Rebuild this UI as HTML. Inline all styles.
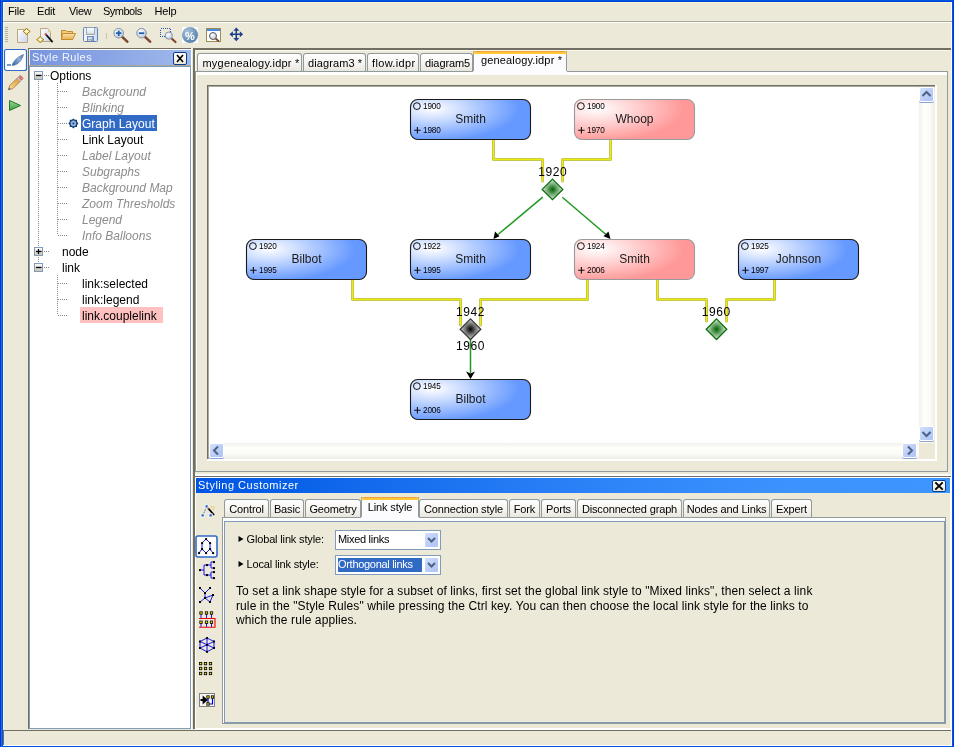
<!DOCTYPE html>
<html><head><meta charset="utf-8">
<style>
html,body{margin:0;padding:0;}
body{will-change:transform;width:954px;height:747px;overflow:hidden;position:relative;background:#0055E5;font-family:"Liberation Sans",sans-serif;font-size:11px;color:#000;}
.a{position:absolute;}
.t{position:absolute;white-space:nowrap;line-height:13px;}
</style></head><body>
<!-- window frame -->
<div class="a" style="left:0;top:0;width:1px;height:747px;background:#0831D9"></div>
<div class="a" style="left:1px;top:0;width:1px;height:747px;background:#166CEF"></div>
<div class="a" style="left:0;top:1px;width:954px;height:1px;background:#0042D6"></div>
<div class="a" style="left:953px;top:0;width:1px;height:747px;background:#0036DA"></div>
<div class="a" style="left:3px;top:2px;width:949px;height:744px;background:#ECE9D8"></div>
<div class="a" style="left:3px;top:2px;width:1px;height:728px;background:#FDF6DA"></div>
<div class="a" style="left:3px;top:2px;width:949px;height:1px;background:#FDF6DA"></div>
<div class="a" style="left:951px;top:2px;width:1px;height:744px;background:#FFFCF0"></div>
<!-- menu bar -->
<div class="t" style="left:8px;top:5px;letter-spacing:-0.2px">File</div>
<div class="t" style="left:37px;top:5px;letter-spacing:-0.2px">Edit</div>
<div class="t" style="left:69px;top:5px;letter-spacing:-0.3px">View</div>
<div class="t" style="left:103px;top:5px;letter-spacing:-0.5px">Symbols</div>
<div class="t" style="left:154.5px;top:5px;letter-spacing:-0.2px">Help</div>
<div class="a" style="left:3px;top:21px;width:949px;height:1px;background:#ACA899"></div>
<div class="a" style="left:3px;top:22px;width:949px;height:1px;background:#FFFFFF"></div>

<!-- toolbar -->
<svg class="a" style="left:0;top:23px" width="260" height="25" viewBox="0 23 260 25">
<defs>
<linearGradient id="pg" x1="0" y1="0" x2="1" y2="1"><stop offset="0" stop-color="#FFFFFF"/><stop offset="1" stop-color="#C9D6EE"/></linearGradient>
<linearGradient id="fo" x1="0" y1="0" x2="0" y2="1"><stop offset="0" stop-color="#FCE3A8"/><stop offset="1" stop-color="#E9AE55"/></linearGradient>
<radialGradient id="lens" cx="0.4" cy="0.35" r="0.7"><stop offset="0" stop-color="#FFFFFF"/><stop offset="1" stop-color="#B9C7D6"/></radialGradient>
<radialGradient id="pct" cx="0.35" cy="0.3" r="0.8"><stop offset="0" stop-color="#A9C2DA"/><stop offset="1" stop-color="#4E7AA5"/></radialGradient>
</defs>
<g fill="#B5B19E"><rect x="5" y="27" width="3" height="1"/><rect x="5" y="29" width="3" height="1"/><rect x="5" y="31" width="3" height="1"/><rect x="5" y="33" width="3" height="1"/><rect x="5" y="35" width="3" height="1"/><rect x="5" y="37" width="3" height="1"/><rect x="5" y="39" width="3" height="1"/><rect x="5" y="41" width="3" height="1"/></g>
<!-- new -->
<path d="M17.5 29.5 H24.5 L27.5 32.5 V42.5 H17.5 Z" fill="url(#pg)" stroke="#BBA878"/>
<path d="M26.6 28 L28 30 L30.2 31.4 L28 32.8 L26.6 35 L25.2 32.8 L23 31.4 L25.2 30 Z" fill="#F8E8A0" stroke="#A8800A" stroke-width="1"/><path d="M26.6 29.5 V33.3 M24.6 31.4 H28.6" stroke="#FFFFF0" stroke-width="0.8"/>
<!-- wand doc -->
<path d="M40.5 28.5 H47.5 L50.5 31.5 V41.5 H40.5 Z" fill="url(#pg)" stroke="#BBA878"/>
<path d="M40.2 36.3 L41.6 38.2 L43.8 39.6 L41.6 41 L40.2 42.9 L38.8 41 L36.6 39.6 L38.8 38.2 Z" fill="#F8E8A0" stroke="#A8800A" stroke-width="1"/><path d="M40.2 37.8 V41.4 M38.4 39.6 H42" stroke="#FFFFF0" stroke-width="0.8"/>
<path d="M45.5 34 L52.6 42.2" stroke="#111" stroke-width="1.8"/>
<path d="M45 33.5 L46.5 35" stroke="#E05030" stroke-width="1.8"/>
<rect x="48" y="31" width="1" height="1" fill="#E8C000"/><rect x="50" y="32" width="1" height="1" fill="#E8C000"/>
<!-- folder -->
<path d="M61.5 30.5 H66 L67 31.5 H72.5 V39.5 H61.5 Z" fill="#F3CB7E" stroke="#C98B2A"/>
<path d="M62.5 33.5 H75.5 L72.5 39.5 H61.5 Z" fill="url(#fo)" stroke="#C98B2A"/>
<!-- save -->
<defs><linearGradient id="sv" x1="0" y1="0" x2="1" y2="0"><stop offset="0" stop-color="#E9EEF8"/><stop offset="0.5" stop-color="#FFFFFF"/><stop offset="1" stop-color="#C9D5EA"/></linearGradient>
<linearGradient id="svl" x1="0" y1="0" x2="0" y2="1"><stop offset="0" stop-color="#FFFFFF"/><stop offset="0.7" stop-color="#DDE8F5"/><stop offset="1" stop-color="#E8C890"/></linearGradient></defs>
<rect x="83.5" y="27.5" width="14" height="14" rx="1" fill="url(#sv)" stroke="#6384B8"/>
<rect x="86.5" y="27.5" width="8" height="7" fill="url(#svl)" stroke="#8A9AB0" stroke-width="0.8"/>
<rect x="87.5" y="36.5" width="6" height="5" fill="#7FA2D4" stroke="#5A7EB5" stroke-width="0.8"/>
<rect x="88" y="37.5" width="4" height="1.2" fill="#FFFFFF"/><rect x="88" y="39.5" width="3" height="1.5" fill="#E8C890"/>
<!-- separator -->
<rect x="106" y="33" width="1" height="6" fill="#C5C2B2"/>
<!-- zoom in -->
<path d="M121.8 36.5 L127.5 41.8" stroke="#7A4A30" stroke-width="2.4" stroke-linecap="round"/>
<circle cx="118.7" cy="33.2" r="4.8" fill="url(#lens)" stroke="#8595A8" stroke-width="1"/>
<path d="M116 33.2 H121.4 M118.7 30.5 V35.9" stroke="#1F5FB0" stroke-width="1.8"/>
<!-- zoom out -->
<path d="M144.6 36.5 L150.3 41.8" stroke="#7A4A30" stroke-width="2.4" stroke-linecap="round"/>
<circle cx="141.5" cy="33.2" r="4.8" fill="url(#lens)" stroke="#8595A8" stroke-width="1"/>
<path d="M138.8 33.2 H144.2" stroke="#1F5FB0" stroke-width="1.8"/>
<!-- zoom box -->
<rect x="160.5" y="28.5" width="10" height="8" fill="none" stroke="#1F55B0" stroke-dasharray="1 1" shape-rendering="crispEdges"/>
<path d="M171 38 L175.5 42" stroke="#7A4A30" stroke-width="2.2" stroke-linecap="round"/>
<circle cx="168.8" cy="35.6" r="3.6" fill="url(#lens)" stroke="#8595A8" stroke-width="1"/>
<!-- percent -->
<rect x="182" y="27" width="16" height="16" fill="#FFFFFF"/>
<circle cx="190" cy="35" r="8" fill="url(#pct)"/>
<text x="190" y="39.5" font-family="Liberation Sans" font-weight="bold" font-size="11" fill="#FFFFFF" text-anchor="middle">%</text>
<!-- fit window -->
<rect x="206.5" y="28.5" width="14" height="13" fill="#FFFFFF" stroke="#A08A50"/>
<rect x="207" y="29" width="13" height="2" fill="#4A8AE0"/>
<path d="M215 38 L218.5 41" stroke="#7A4A30" stroke-width="1.8" stroke-linecap="round"/>
<circle cx="213" cy="36" r="3.5" fill="url(#lens)" stroke="#5A5A5A" stroke-width="1"/>
<!-- pan -->
<g stroke="#1E3F8A" stroke-width="1.6" fill="#1E3F8A">
<path d="M236.3 29 V40 M230.8 34.3 H241.8" fill="none"/>
</g>
<g fill="#1E3F8A">
<path d="M236.3 27.5 L233.3 30.8 H239.3 Z"/><path d="M236.3 41.3 L233.3 38 H239.3 Z"/>
<path d="M229.5 34.3 L232.8 31.3 V37.3 Z"/><path d="M243.1 34.3 L239.8 31.3 V37.3 Z"/>
</g>
</svg>


<!-- left vertical toolbar -->
<svg class="a" style="left:3px;top:48px" width="25" height="80" viewBox="3 48 25 80">
<defs><linearGradient id="pen" x1="0" y1="0" x2="1" y2="0"><stop offset="0" stop-color="#F8E2A0"/><stop offset="1" stop-color="#E0A040"/></linearGradient></defs>
<rect x="4.5" y="49.5" width="22" height="21" rx="2" fill="#FFFFFF" stroke="#3169C6" stroke-width="1.2"/>
<defs><linearGradient id="fe" x1="0" y1="1" x2="1" y2="0"><stop offset="0" stop-color="#2F5E9E"/><stop offset="0.6" stop-color="#8FB0D8"/><stop offset="1" stop-color="#5C6F8A"/></linearGradient></defs>
<path d="M12 65.5 C13.5 61 17 57 23.5 54.5 C22.5 58 20.5 62.5 16 64.5 C14.5 65.2 13 65.5 12 65.5 Z" fill="url(#fe)" stroke="#4A6C9C" stroke-width="0.6"/>
<path d="M7 65 H11" stroke="#3C6AB0" stroke-width="1.4"/>
<g transform="translate(15.2,83.2) rotate(-44)">
<path d="M-5.5 -2.2 H5 V2.2 H-5.5 L-9.5 0 Z" fill="url(#pen)" stroke="#B8743A" stroke-width="0.8"/>
<path d="M-9.5 0 L-7.3 -1.2 V1.2 Z" fill="#3A5AA0"/>
<rect x="4.6" y="-2.2" width="2" height="4.4" fill="#C8C8D0" stroke="#9A9AA8" stroke-width="0.5"/>
<rect x="6.6" y="-2.3" width="2.6" height="4.6" rx="1.2" fill="#E88080" stroke="#B85050" stroke-width="0.6"/>
</g>
<defs><linearGradient id="pl" x1="0" y1="0" x2="0" y2="1"><stop offset="0" stop-color="#9AD890"/><stop offset="1" stop-color="#3A9E48"/></linearGradient></defs>
<path d="M9.5 100.5 L20.5 105.5 L9.5 110.5 Z" fill="url(#pl)" stroke="#1E7A2A" stroke-width="1"/>
</svg>


<!-- Style Rules panel -->
<div class="a" style="left:28px;top:48px;width:163px;height:1px;background:#716F64"></div>
<div class="a" style="left:28px;top:48px;width:1px;height:681px;background:#716F64"></div>
<div class="a" style="left:29px;top:49px;width:162px;height:1px;background:#FFFFFF"></div>
<div class="a" style="left:30px;top:50px;width:161px;height:15px;background:linear-gradient(to right,#7895DF,#8AA5E5 50%,#A0BAEC)"></div>
<div class="t" style="left:32px;top:51px;color:#F2F5FC;letter-spacing:0.4px">Style Rules</div>
<div class="a" style="left:173px;top:52px;width:12px;height:11px;border:1px solid #0A3C8A;border-radius:2px;background:linear-gradient(#FFFFFF,#ECE9D8)"></div>
<svg class="a" style="left:173px;top:52px" width="14" height="13"><path d="M4 3 L10 10 M10 3 L4 10" stroke="#000" stroke-width="1.6"/></svg>
<div class="a" style="left:29px;top:65px;width:162px;height:1px;background:#ACA899"></div>
<div class="a" style="left:29px;top:66px;width:162px;height:663px;background:#7F9DB9"></div>
<div class="a" style="left:30px;top:67px;width:160px;height:661px;background:#FFFFFF"></div>
<div class="a" style="left:81px;top:115px;width:76px;height:16px;background:#316AC5"></div>
<div class="a" style="left:80px;top:307px;width:83px;height:16px;background:#FFC0C0"></div>
<svg class="a" style="left:30px;top:67px" width="160" height="270" viewBox="30 67 160 270">
<defs><linearGradient id="bx" x1="0" y1="0" x2="0" y2="1"><stop offset="0" stop-color="#FFFFFF"/><stop offset="1" stop-color="#C6C0AE"/></linearGradient></defs><g stroke="#8A8A8A" stroke-width="1" stroke-dasharray="1 1" fill="none">
<path d="M38.5 81 V267"/>
<path d="M44 75.5 H49"/>
<path d="M57.5 83 V235"/>
<path d="M58 91.5 H67"/>
<path d="M58 107.5 H67"/>
<path d="M58 123.5 H67"/>
<path d="M58 139.5 H67"/>
<path d="M58 155.5 H67"/>
<path d="M58 171.5 H67"/>
<path d="M58 187.5 H67"/>
<path d="M58 203.5 H67"/>
<path d="M58 219.5 H67"/>
<path d="M58 235.5 H67"/>
<path d="M44 251.5 H50"/><path d="M44 267.5 H50"/>
<path d="M57.5 275 V315"/>
<path d="M58 283.5 H67"/>
<path d="M58 299.5 H67"/>
<path d="M58 315.5 H67"/>
</g>
<rect x="34.5" y="71.5" width="8" height="8" fill="url(#bx)" stroke="#7F9DB9"/><path d="M36 75.5 H41.5" stroke="#000" stroke-width="1.3"/><rect x="34.5" y="247.5" width="8" height="8" fill="url(#bx)" stroke="#7F9DB9"/><path d="M36 251.5 H41.5" stroke="#000" stroke-width="1.3"/><path d="M38.5 249 V254" stroke="#000" stroke-width="1.2"/><rect x="34.5" y="263.5" width="8" height="8" fill="url(#bx)" stroke="#7F9DB9"/><path d="M36 267.5 H41.5" stroke="#000" stroke-width="1.3"/><path d="M78.40 123.40 L77.10 124.93 L76.94 126.94 L74.93 127.10 L73.40 128.40 L71.87 127.10 L69.86 126.94 L69.70 124.93 L68.40 123.40 L69.70 121.87 L69.86 119.86 L71.87 119.70 L73.40 118.40 L74.93 119.70 L76.94 119.86 L77.10 121.87 Z" fill="#0D3D7A"/><circle cx="73.4" cy="123.4" r="2.8" fill="#8FB0D8"/><circle cx="73.4" cy="123.4" r="0.9" fill="#0D3D7A"/></svg>
<div class="t" style="left:50px;top:68px;font-size:12px;line-height:16px;">Options</div>
<div class="t" style="left:82px;top:84px;font-size:12px;line-height:16px;font-style:italic;color:#8C8C8C;">Background</div>
<div class="t" style="left:82px;top:100px;font-size:12px;line-height:16px;font-style:italic;color:#8C8C8C;">Blinking</div>
<div class="t" style="left:82px;top:116px;font-size:12px;line-height:16px;color:#FFF;">Graph Layout</div>
<div class="t" style="left:82px;top:132px;font-size:12px;line-height:16px;">Link Layout</div>
<div class="t" style="left:82px;top:148px;font-size:12px;line-height:16px;font-style:italic;color:#8C8C8C;">Label Layout</div>
<div class="t" style="left:82px;top:164px;font-size:12px;line-height:16px;font-style:italic;color:#8C8C8C;">Subgraphs</div>
<div class="t" style="left:82px;top:180px;font-size:12px;line-height:16px;font-style:italic;color:#8C8C8C;">Background Map</div>
<div class="t" style="left:82px;top:196px;font-size:12px;line-height:16px;font-style:italic;color:#8C8C8C;">Zoom Thresholds</div>
<div class="t" style="left:82px;top:212px;font-size:12px;line-height:16px;font-style:italic;color:#8C8C8C;">Legend</div>
<div class="t" style="left:82px;top:228px;font-size:12px;line-height:16px;font-style:italic;color:#8C8C8C;">Info Balloons</div>
<div class="t" style="left:62px;top:244px;font-size:12px;line-height:16px;">node</div>
<div class="t" style="left:62px;top:260px;font-size:12px;line-height:16px;">link</div>
<div class="t" style="left:82px;top:276px;font-size:12px;line-height:16px;">link:selected</div>
<div class="t" style="left:82px;top:292px;font-size:12px;line-height:16px;">link:legend</div>
<div class="t" style="left:82px;top:308px;font-size:12px;line-height:16px;">link.couplelink</div>

<!-- split divider -->
<div class="a" style="left:193px;top:48px;width:2px;height:681px;background:#716F64"></div>

<!-- top tabs -->
<div class="a" style="left:193px;top:48px;width:758px;height:2px;background:#716F64"></div>
<div class="a" style="left:195px;top:50px;width:756px;height:1px;background:#FBF8EA"></div>
<div class="a" style="left:195px;top:50px;width:1px;height:421px;background:#FBF8EA"></div>
<div class="a" style="left:191px;top:49px;width:1px;height:681px;background:#FFFFFF"></div>

<!-- tab content -->
<div class="a" style="left:195px;top:71px;width:753px;height:401px;background:#919B9C"></div>
<div class="a" style="left:196px;top:72px;width:751px;height:399px;background:#FFFFFF"></div>
<div class="a" style="left:197px;top:75px;width:750px;height:396px;background:#ECE9D8"></div>
<div class="a" style="left:197px;top:53px;width:105px;height:18px;border:1px solid #919B9C;border-bottom:none;border-radius:3px 3px 0 0;background:linear-gradient(#FFFFFF,#F4F3EE 60%,#E8E6DD);box-sizing:border-box"></div>
<div class="t" style="left:202.5px;top:57px;letter-spacing:0.2px">mygenealogy.idpr *</div>
<div class="a" style="left:303px;top:53px;width:63px;height:18px;border:1px solid #919B9C;border-bottom:none;border-radius:3px 3px 0 0;background:linear-gradient(#FFFFFF,#F4F3EE 60%,#E8E6DD);box-sizing:border-box"></div>
<div class="t" style="left:308.0px;top:57px;letter-spacing:0.1px">diagram3 *</div>
<div class="a" style="left:367px;top:53px;width:52px;height:18px;border:1px solid #919B9C;border-bottom:none;border-radius:3px 3px 0 0;background:linear-gradient(#FFFFFF,#F4F3EE 60%,#E8E6DD);box-sizing:border-box"></div>
<div class="t" style="left:372.0px;top:57px;letter-spacing:0.35px">flow.idpr</div>
<div class="a" style="left:420px;top:53px;width:53px;height:18px;border:1px solid #919B9C;border-bottom:none;border-radius:3px 3px 0 0;background:linear-gradient(#FFFFFF,#F4F3EE 60%,#E8E6DD);box-sizing:border-box"></div>
<div class="t" style="left:425.0px;top:57px;letter-spacing:-0.1px">diagram5</div>
<div class="a" style="left:473px;top:51px;width:94px;height:21px;background:#FCFCFE;border-left:1px solid #919B9C;border-right:1px solid #919B9C;box-sizing:border-box"></div><div class="a" style="left:473px;top:71px;width:94px;height:4px;background:#FCFCFE"></div>
<div class="a" style="left:473px;top:51px;width:94px;height:3px;background:linear-gradient(#E68B2C,#FFC73C 40%,#FFC73C);border-radius:3px 3px 0 0"></div>
<div class="t" style="left:481px;top:54px;letter-spacing:0.15px">genealogy.idpr *</div>
<!-- canvas scroll pane -->
<div class="a" style="left:207px;top:85px;width:730px;height:376px;background:#FFFFFF"></div>
<div class="a" style="left:207px;top:85px;width:728px;height:374px;background:#716F64"></div>
<div class="a" style="left:208px;top:86px;width:727px;height:373px;background:#ACA899"></div>
<div class="a" style="left:209px;top:87px;width:710px;height:356px;background:#FFFFFF"></div>
<svg class="a" style="left:209px;top:87px" width="710" height="356" viewBox="209 87 710 356">
<defs>
<radialGradient id="n0" gradientUnits="userSpaceOnUse" cx="0" cy="0" r="1" gradientTransform="translate(433,109) scale(86,32)"><stop offset="0" stop-color="#FFFFFF"/><stop offset="1" stop-color="#6699FF"/></radialGradient>
<radialGradient id="n1" gradientUnits="userSpaceOnUse" cx="0" cy="0" r="1" gradientTransform="translate(597,109) scale(86,32)"><stop offset="0" stop-color="#FFFFFF"/><stop offset="1" stop-color="#FF9999"/></radialGradient>
<radialGradient id="n2" gradientUnits="userSpaceOnUse" cx="0" cy="0" r="1" gradientTransform="translate(269,249) scale(86,32)"><stop offset="0" stop-color="#FFFFFF"/><stop offset="1" stop-color="#6699FF"/></radialGradient>
<radialGradient id="n3" gradientUnits="userSpaceOnUse" cx="0" cy="0" r="1" gradientTransform="translate(433,249) scale(86,32)"><stop offset="0" stop-color="#FFFFFF"/><stop offset="1" stop-color="#6699FF"/></radialGradient>
<radialGradient id="n4" gradientUnits="userSpaceOnUse" cx="0" cy="0" r="1" gradientTransform="translate(597,249) scale(86,32)"><stop offset="0" stop-color="#FFFFFF"/><stop offset="1" stop-color="#FF9999"/></radialGradient>
<radialGradient id="n5" gradientUnits="userSpaceOnUse" cx="0" cy="0" r="1" gradientTransform="translate(761,249) scale(86,32)"><stop offset="0" stop-color="#FFFFFF"/><stop offset="1" stop-color="#6699FF"/></radialGradient>
<radialGradient id="n6" gradientUnits="userSpaceOnUse" cx="0" cy="0" r="1" gradientTransform="translate(433,389) scale(86,32)"><stop offset="0" stop-color="#FFFFFF"/><stop offset="1" stop-color="#6699FF"/></radialGradient>
<radialGradient id="dg" cx="0.5" cy="0.5" r="0.5"><stop offset="0" stop-color="#006400"/><stop offset="1" stop-color="#E6F0E6"/></radialGradient>
<radialGradient id="dk" cx="0.5" cy="0.5" r="0.5"><stop offset="0" stop-color="#000000"/><stop offset="1" stop-color="#E0E0E0"/></radialGradient>
</defs>
<g fill="none" stroke-linejoin="round" stroke-linecap="round">
<path d="M493.5 140 V159.5 H542.5 V181" stroke="#C8C850" stroke-width="3"/>
<path d="M610.5 140 V159.5 H562.5 V181" stroke="#C8C850" stroke-width="3"/>
<path d="M352.5 280 V299.5 H460.5 V325" stroke="#C8C850" stroke-width="3"/>
<path d="M587.5 280 V299.5 H480.5 V325" stroke="#C8C850" stroke-width="3"/>
<path d="M657.5 280 V299.5 H706.5 V321" stroke="#C8C850" stroke-width="3"/>
<path d="M774.5 280 V299.5 H726.5 V321" stroke="#C8C850" stroke-width="3"/>
<path d="M493.5 140 V159.5 H542.5 V181" stroke="#EEEE00" stroke-width="1"/>
<path d="M610.5 140 V159.5 H562.5 V181" stroke="#EEEE00" stroke-width="1"/>
<path d="M352.5 280 V299.5 H460.5 V325" stroke="#EEEE00" stroke-width="1"/>
<path d="M587.5 280 V299.5 H480.5 V325" stroke="#EEEE00" stroke-width="1"/>
<path d="M657.5 280 V299.5 H706.5 V321" stroke="#EEEE00" stroke-width="1"/>
<path d="M774.5 280 V299.5 H726.5 V321" stroke="#EEEE00" stroke-width="1"/>
</g>
<g stroke="#1F991F" stroke-width="1.5" fill="none"><path d="M542.7 197.2 L498 234.5"/><path d="M562.3 197.2 L606 234.5"/><path d="M470.5 339 V373"/></g>
<g fill="#000"><path d="M493.5 239 L495 231.5 L499.5 236.2 Z"/><path d="M610.5 239 L603.5 236.2 L608.5 231.5 Z"/><path d="M470.5 379 L466 371.5 L470.5 373.5 L475 371.5 Z"/></g>
<path d="M552.5 179.1 L562.8 189.4 L552.5 199.7 L542.2 189.4 Z" fill="url(#dg)" stroke="#0A6E0A" stroke-width="1.3"/>
<path d="M470.5 318.9 L480.8 329.2 L470.5 339.5 L460.2 329.2 Z" fill="url(#dk)" stroke="#3A3A3A" stroke-width="1.3"/>
<path d="M716.5 318.9 L726.8 329.2 L716.5 339.5 L706.2 329.2 Z" fill="url(#dg)" stroke="#0A6E0A" stroke-width="1.3"/>
<g font-family="Liberation Sans" font-size="12" fill="#000" text-anchor="middle" letter-spacing="0.6"><text x="552.7" y="176.2">1920</text><text x="470.5" y="316">1942</text><text x="470.5" y="349.8">1960</text><text x="716.2" y="316">1960</text></g>
<rect x="410.5" y="99.5" width="120" height="40" rx="7.5" fill="url(#n0)" stroke="#1A1A1A" stroke-width="1.1"/>
<circle cx="416.9" cy="106.1" r="3.4" fill="none" stroke="#111" stroke-width="1"/>
<path d="M414.2 130.3 H420.6 M417.4 127.1 V133.5" stroke="#111" stroke-width="1.1"/>
<text x="423.0" y="108.9" font-family="Liberation Sans" font-size="8.2" letter-spacing="-0.15" fill="#000">1900</text>
<text x="423.0" y="133.0" font-family="Liberation Sans" font-size="8.2" letter-spacing="-0.15" fill="#000">1980</text>
<text x="470.5" y="123.0" font-family="Liberation Sans" font-size="12" fill="#1A1A1A" text-anchor="middle">Smith</text>
<rect x="574.5" y="99.5" width="120" height="40" rx="7.5" fill="url(#n1)" stroke="#9A9A9A" stroke-width="1.1"/>
<circle cx="580.9" cy="106.1" r="3.4" fill="none" stroke="#111" stroke-width="1"/>
<path d="M578.2 130.3 H584.6 M581.4 127.1 V133.5" stroke="#111" stroke-width="1.1"/>
<text x="587.0" y="108.9" font-family="Liberation Sans" font-size="8.2" letter-spacing="-0.15" fill="#000">1900</text>
<text x="587.0" y="133.0" font-family="Liberation Sans" font-size="8.2" letter-spacing="-0.15" fill="#000">1970</text>
<text x="634.5" y="123.0" font-family="Liberation Sans" font-size="12" fill="#1A1A1A" text-anchor="middle">Whoop</text>
<rect x="246.5" y="239.5" width="120" height="40" rx="7.5" fill="url(#n2)" stroke="#1A1A1A" stroke-width="1.1"/>
<circle cx="252.9" cy="246.1" r="3.4" fill="none" stroke="#111" stroke-width="1"/>
<path d="M250.2 270.3 H256.6 M253.4 267.1 V273.5" stroke="#111" stroke-width="1.1"/>
<text x="259.0" y="248.9" font-family="Liberation Sans" font-size="8.2" letter-spacing="-0.15" fill="#000">1920</text>
<text x="259.0" y="273.0" font-family="Liberation Sans" font-size="8.2" letter-spacing="-0.15" fill="#000">1995</text>
<text x="306.5" y="263.0" font-family="Liberation Sans" font-size="12" fill="#1A1A1A" text-anchor="middle">Bilbot</text>
<rect x="410.5" y="239.5" width="120" height="40" rx="7.5" fill="url(#n3)" stroke="#1A1A1A" stroke-width="1.1"/>
<circle cx="416.9" cy="246.1" r="3.4" fill="none" stroke="#111" stroke-width="1"/>
<path d="M414.2 270.3 H420.6 M417.4 267.1 V273.5" stroke="#111" stroke-width="1.1"/>
<text x="423.0" y="248.9" font-family="Liberation Sans" font-size="8.2" letter-spacing="-0.15" fill="#000">1922</text>
<text x="423.0" y="273.0" font-family="Liberation Sans" font-size="8.2" letter-spacing="-0.15" fill="#000">1995</text>
<text x="470.5" y="263.0" font-family="Liberation Sans" font-size="12" fill="#1A1A1A" text-anchor="middle">Smith</text>
<rect x="574.5" y="239.5" width="120" height="40" rx="7.5" fill="url(#n4)" stroke="#9A9A9A" stroke-width="1.1"/>
<circle cx="580.9" cy="246.1" r="3.4" fill="none" stroke="#111" stroke-width="1"/>
<path d="M578.2 270.3 H584.6 M581.4 267.1 V273.5" stroke="#111" stroke-width="1.1"/>
<text x="587.0" y="248.9" font-family="Liberation Sans" font-size="8.2" letter-spacing="-0.15" fill="#000">1924</text>
<text x="587.0" y="273.0" font-family="Liberation Sans" font-size="8.2" letter-spacing="-0.15" fill="#000">2006</text>
<text x="634.5" y="263.0" font-family="Liberation Sans" font-size="12" fill="#1A1A1A" text-anchor="middle">Smith</text>
<rect x="738.5" y="239.5" width="120" height="40" rx="7.5" fill="url(#n5)" stroke="#1A1A1A" stroke-width="1.1"/>
<circle cx="744.9" cy="246.1" r="3.4" fill="none" stroke="#111" stroke-width="1"/>
<path d="M742.2 270.3 H748.6 M745.4 267.1 V273.5" stroke="#111" stroke-width="1.1"/>
<text x="751.0" y="248.9" font-family="Liberation Sans" font-size="8.2" letter-spacing="-0.15" fill="#000">1925</text>
<text x="751.0" y="273.0" font-family="Liberation Sans" font-size="8.2" letter-spacing="-0.15" fill="#000">1997</text>
<text x="798.5" y="263.0" font-family="Liberation Sans" font-size="12" fill="#1A1A1A" text-anchor="middle">Johnson</text>
<rect x="410.5" y="379.5" width="120" height="40" rx="7.5" fill="url(#n6)" stroke="#1A1A1A" stroke-width="1.1"/>
<circle cx="416.9" cy="386.1" r="3.4" fill="none" stroke="#111" stroke-width="1"/>
<path d="M414.2 410.3 H420.6 M417.4 407.1 V413.5" stroke="#111" stroke-width="1.1"/>
<text x="423.0" y="388.9" font-family="Liberation Sans" font-size="8.2" letter-spacing="-0.15" fill="#000">1945</text>
<text x="423.0" y="413.0" font-family="Liberation Sans" font-size="8.2" letter-spacing="-0.15" fill="#000">2006</text>
<text x="470.5" y="403.0" font-family="Liberation Sans" font-size="12" fill="#1A1A1A" text-anchor="middle">Bilbot</text>
</svg>

<div class="a" style="left:919px;top:87px;width:16px;height:356px;background:linear-gradient(to right,#F3F1EC,#FEFEFB 30%,#FBFAF6 70%,#EEEDE5)"></div>
<div class="a" style="left:209px;top:443px;width:710px;height:16px;background:linear-gradient(#F3F1EC,#FEFEFB 30%,#FBFAF6 70%,#EEEDE5)"></div>
<div class="a" style="left:919px;top:443px;width:16px;height:16px;background:#ECE9D8"></div>
<div class="a" style="left:919px;top:87px;width:15px;height:15px;box-sizing:border-box;border:1px solid #FFFFFF;border-radius:2px;background:linear-gradient(135deg,#D3E0FB,#B9CCF7 60%,#AFC4F4);box-shadow:0 1px 0 #8AA4D8"></div><svg class="a" style="left:919px;top:87px" width="15" height="15"><path d="M3.5 9 L7.5 5 L11.5 9" fill="none" stroke="#4D6185" stroke-width="2"/></svg>
<div class="a" style="left:919px;top:426px;width:15px;height:15px;box-sizing:border-box;border:1px solid #FFFFFF;border-radius:2px;background:linear-gradient(135deg,#D3E0FB,#B9CCF7 60%,#AFC4F4);box-shadow:0 1px 0 #8AA4D8"></div><svg class="a" style="left:919px;top:426px" width="15" height="15"><path d="M3.5 6 L7.5 10 L11.5 6" fill="none" stroke="#4D6185" stroke-width="2"/></svg>
<div class="a" style="left:209px;top:443px;width:15px;height:15px;box-sizing:border-box;border:1px solid #FFFFFF;border-radius:2px;background:linear-gradient(135deg,#D3E0FB,#B9CCF7 60%,#AFC4F4);box-shadow:0 1px 0 #8AA4D8"></div><svg class="a" style="left:209px;top:443px" width="15" height="15"><path d="M9 3.5 L5 7.5 L9 11.5" fill="none" stroke="#4D6185" stroke-width="2"/></svg>
<div class="a" style="left:902px;top:443px;width:15px;height:15px;box-sizing:border-box;border:1px solid #FFFFFF;border-radius:2px;background:linear-gradient(135deg,#D3E0FB,#B9CCF7 60%,#AFC4F4);box-shadow:0 1px 0 #8AA4D8"></div><svg class="a" style="left:902px;top:443px" width="15" height="15"><path d="M6 3.5 L10 7.5 L6 11.5" fill="none" stroke="#4D6185" stroke-width="2"/></svg>


<!-- horizontal split divider -->
<div class="a" style="left:195px;top:474px;width:757px;height:2px;background:#FFFFFF"></div>
<div class="a" style="left:193px;top:476px;width:758px;height:1px;background:#716F64"></div>

<!-- Styling customizer -->
<div class="a" style="left:195px;top:477px;width:756px;height:253px;background:#FFFFFF"></div>
<div class="a" style="left:196px;top:478px;width:754px;height:250px;background:#ECE9D8"></div>
<div class="a" style="left:196px;top:478px;width:754px;height:15px;background:linear-gradient(to right,#0054E3 0%,#0A62E8 14%,#176EEE 27%,#2D84F8 54%,#3D93FE 80%,#3F95FF 100%)"></div>
<div class="t" style="left:198px;top:479px;color:#FFFFFF;letter-spacing:0.5px">Styling Customizer</div>
<div class="a" style="left:932px;top:480px;width:12px;height:10px;border:1px solid #0A3C8A;border-radius:2px;background:linear-gradient(#FFFFFF,#ECE9D8)"></div>
<svg class="a" style="left:932px;top:480px" width="14" height="12"><path d="M3.3 2.3 L10.7 9.7 M10.7 2.3 L3.3 9.7" stroke="#000" stroke-width="1.9"/></svg>
<div class="a" style="left:222px;top:517px;width:724px;height:207px;background:#919B9C"></div>
<div class="a" style="left:223px;top:518px;width:722px;height:205px;background:#FFFFFF"></div>
<div class="a" style="left:224px;top:521px;width:721px;height:202px;background:#7F9DB9"></div>
<div class="a" style="left:225px;top:522px;width:719px;height:200px;background:#ECE9D8"></div>
<div class="a" style="left:224px;top:499px;width:45px;height:18px;border:1px solid #919B9C;border-bottom:none;border-radius:3px 3px 0 0;background:linear-gradient(#FFFFFF,#F4F3EE 60%,#E8E6DD);box-sizing:border-box"></div>
<div class="t" style="left:224px;top:503px;width:45px;text-align:center;letter-spacing:-0.15px">Control</div>
<div class="a" style="left:270px;top:499px;width:34px;height:18px;border:1px solid #919B9C;border-bottom:none;border-radius:3px 3px 0 0;background:linear-gradient(#FFFFFF,#F4F3EE 60%,#E8E6DD);box-sizing:border-box"></div>
<div class="t" style="left:270px;top:503px;width:34px;text-align:center;letter-spacing:-0.15px">Basic</div>
<div class="a" style="left:305px;top:499px;width:56px;height:18px;border:1px solid #919B9C;border-bottom:none;border-radius:3px 3px 0 0;background:linear-gradient(#FFFFFF,#F4F3EE 60%,#E8E6DD);box-sizing:border-box"></div>
<div class="t" style="left:305px;top:503px;width:56px;text-align:center;letter-spacing:-0.15px">Geometry</div>
<div class="a" style="left:419px;top:499px;width:89px;height:18px;border:1px solid #919B9C;border-bottom:none;border-radius:3px 3px 0 0;background:linear-gradient(#FFFFFF,#F4F3EE 60%,#E8E6DD);box-sizing:border-box"></div>
<div class="t" style="left:419px;top:503px;width:89px;text-align:center;letter-spacing:-0.15px">Connection style</div>
<div class="a" style="left:509px;top:499px;width:31px;height:18px;border:1px solid #919B9C;border-bottom:none;border-radius:3px 3px 0 0;background:linear-gradient(#FFFFFF,#F4F3EE 60%,#E8E6DD);box-sizing:border-box"></div>
<div class="t" style="left:509px;top:503px;width:31px;text-align:center;letter-spacing:-0.15px">Fork</div>
<div class="a" style="left:541px;top:499px;width:35px;height:18px;border:1px solid #919B9C;border-bottom:none;border-radius:3px 3px 0 0;background:linear-gradient(#FFFFFF,#F4F3EE 60%,#E8E6DD);box-sizing:border-box"></div>
<div class="t" style="left:541px;top:503px;width:35px;text-align:center;letter-spacing:-0.15px">Ports</div>
<div class="a" style="left:577px;top:499px;width:105px;height:18px;border:1px solid #919B9C;border-bottom:none;border-radius:3px 3px 0 0;background:linear-gradient(#FFFFFF,#F4F3EE 60%,#E8E6DD);box-sizing:border-box"></div>
<div class="t" style="left:577px;top:503px;width:105px;text-align:center;letter-spacing:-0.15px">Disconnected graph</div>
<div class="a" style="left:683px;top:499px;width:87px;height:18px;border:1px solid #919B9C;border-bottom:none;border-radius:3px 3px 0 0;background:linear-gradient(#FFFFFF,#F4F3EE 60%,#E8E6DD);box-sizing:border-box"></div>
<div class="t" style="left:683px;top:503px;width:87px;text-align:center;letter-spacing:-0.15px">Nodes and Links</div>
<div class="a" style="left:771px;top:499px;width:41px;height:18px;border:1px solid #919B9C;border-bottom:none;border-radius:3px 3px 0 0;background:linear-gradient(#FFFFFF,#F4F3EE 60%,#E8E6DD);box-sizing:border-box"></div>
<div class="t" style="left:771px;top:503px;width:41px;text-align:center;letter-spacing:-0.15px">Expert</div>
<div class="a" style="left:361px;top:497px;width:58px;height:21px;background:#FCFCFE;border-left:1px solid #919B9C;border-right:1px solid #919B9C;box-sizing:border-box"></div><div class="a" style="left:361px;top:517px;width:58px;height:4px;background:#FCFCFE"></div>
<div class="a" style="left:361px;top:497px;width:58px;height:3px;background:linear-gradient(#E68B2C,#FFC73C 40%,#FFC73C);border-radius:3px 3px 0 0"></div>
<div class="t" style="left:361px;top:501px;width:58px;text-align:center;letter-spacing:-0.15px">Link style</div>
<svg class="a" style="left:237px;top:534px" width="8" height="40"><path d="M1.5 2 L6.5 5 L1.5 8 Z" fill="#000"/><path d="M1.5 27 L6.5 30 L1.5 33 Z" fill="#000"/></svg>
<div class="t" style="left:246.5px;top:533px;letter-spacing:-0.15px">Global link style:</div>
<div class="t" style="left:246.5px;top:558px;letter-spacing:-0.15px">Local link style:</div>
<div class="a" style="left:335px;top:530px;width:106px;height:20px;box-sizing:border-box;border:1px solid #7F9DB9;background:#FFFFFF"></div>
<div class="t" style="left:338px;top:533px;letter-spacing:-0.3px">Mixed links</div>
<div class="a" style="left:335px;top:555px;width:106px;height:20px;box-sizing:border-box;border:1px solid #7F9DB9;background:#FFFFFF"></div>
<div class="a" style="left:338px;top:558px;width:84px;height:14px;background:#316AC5"></div>
<div class="t" style="left:338px;top:558px;color:#FFFFFF;letter-spacing:-0.3px">Orthogonal links</div>
<div class="a" style="left:424px;top:532px;width:15px;height:16px;box-sizing:border-box;border:1px solid #FFFFFF;border-radius:2px;background:linear-gradient(135deg,#D3E0FB,#B9CCF7 60%,#AFC4F4)"></div><svg class="a" style="left:424px;top:532px" width="15" height="16"><path d="M4 6 L7.5 9.5 L11 6" fill="none" stroke="#4D6185" stroke-width="2"/></svg>
<div class="a" style="left:424px;top:557px;width:15px;height:16px;box-sizing:border-box;border:1px solid #FFFFFF;border-radius:2px;background:linear-gradient(135deg,#D3E0FB,#B9CCF7 60%,#AFC4F4)"></div><svg class="a" style="left:424px;top:557px" width="15" height="16"><path d="M4 6 L7.5 9.5 L11 6" fill="none" stroke="#4D6185" stroke-width="2"/></svg>
<div class="a" style="left:236px;top:584px;font-size:12px;line-height:14.5px;letter-spacing:0.1px;white-space:nowrap">To set a link shape style for a subset of links, first set the global link style to "Mixed links", then select a link<br>rule in the "Style Rules" while pressing the Ctrl key. You can then choose the local link style for the links to<br>which the rule applies.</div>

<svg class="a" style="left:195px;top:498px" width="27" height="215" viewBox="195 498 27 215">
<!-- wand -->
<path d="M203 515 L206.5 507" stroke="#1F4F9A" stroke-width="1" stroke-dasharray="1 1"/>
<path d="M207.5 507.5 L214 515" stroke="#000" stroke-width="1.8"/>
<path d="M206.5 506.5 L208.5 508.5" stroke="#D05020" stroke-width="1.6"/>
<g fill="#3B6CC0" stroke="#FFFFFF" stroke-width="0.8"><rect x="205" y="504.8" width="3.2" height="3.2"/><rect x="201" y="513.8" width="3.2" height="3.2"/><rect x="209" y="513.8" width="3.2" height="3.2"/></g>
<g fill="#E8C000"><rect x="211" y="506" width="1.2" height="1.2"/><rect x="213.5" y="506.5" width="1.2" height="1.2"/><rect x="212.5" y="508.5" width="1.2" height="1.2"/></g>
<!-- selected box -->
<rect x="196" y="536" width="21" height="21" rx="2" fill="#FFFFFF" stroke="#316AC5" stroke-width="1.6"/>
<g stroke="#0000F0" stroke-width="0.9" fill="none">
<path d="M206 539 L202 543 V549 L199 553 M202 549 L206 553 L210 549 L213 553 M206 539 L210 543 V549"/>
<path d="M200 570 H204 M204 565 V575 M204 565 H207 M204 575 H207 M207 565 H211 M207 575 H211 M211 562 V568 M211 572 V578 M211 562 H214 M211 568 H214 M211 572 H214 M211 578 H214"/>
<path d="M200 588 L205 593 L210 588 M205 593 V598 L200 602 M205 598 L213 595 L210 602 Z"/>
<path d="M201 613 V618.5 M206.5 613 V618.5 M211.5 613 V618.5 M201 622 V627 M206.5 622 V627 M211.5 622 V627"/>
<path d="M207 638 L214 641.5 V648 L207 651.8 L200 648 V641.5 Z M207 638 V651.8 M200 641.5 L214 648 M214 641.5 L200 648"/>
</g>
<path d="M199 618.5 H215 V627.3 H199" stroke="#F00000" stroke-width="1.1" fill="none"/>
<g fill="#000">
<rect x="205.1" y="538.1" width="2" height="2"/><rect x="201.1" y="542.1" width="2" height="2"/><rect x="209.1" y="542.1" width="2" height="2"/>
<rect x="201.1" y="548.1" width="2" height="2"/><rect x="209.1" y="548.1" width="2" height="2"/>
<rect x="198.1" y="552.1" width="2" height="2"/><rect x="205.1" y="552.1" width="2" height="2"/><rect x="212.1" y="552.1" width="2" height="2"/>
<rect x="199.0" y="569.1" width="2" height="2"/><rect x="206.0" y="564.1" width="2" height="2"/><rect x="206.0" y="574.1" width="2" height="2"/>
<rect x="213.0" y="561.1" width="2" height="2"/><rect x="213.0" y="567.1" width="2" height="2"/><rect x="213.0" y="571.1" width="2" height="2"/><rect x="213.0" y="577.1" width="2" height="2"/>
<rect x="199.0" y="587.0" width="2" height="2"/><rect x="209.0" y="587.0" width="2" height="2"/><rect x="204.0" y="592.0" width="2" height="2"/><rect x="204.0" y="597.0" width="2" height="2"/><rect x="212.0" y="594.0" width="2" height="2"/><rect x="199.0" y="601.0" width="2" height="2"/><rect x="209.0" y="601.0" width="2" height="2"/>
<rect x="206.0" y="637.1" width="2" height="2"/><rect x="206.0" y="650.8" width="2" height="2"/><rect x="199.0" y="640.5" width="2" height="2"/><rect x="213.0" y="640.5" width="2" height="2"/><rect x="199.0" y="647.0" width="2" height="2"/><rect x="213.0" y="647.0" width="2" height="2"/><rect x="206.0" y="643.7" width="2" height="2"/>
</g>
<g fill="#F0E000" stroke="#000" stroke-width="0.8">
<rect x="199.8" y="611.8" width="2.4" height="2.4"/><rect x="205.3" y="611.8" width="2.4" height="2.4"/><rect x="210.3" y="611.8" width="2.4" height="2.4"/>
<rect x="199.8" y="621.0" width="2.4" height="2.4"/><rect x="205.3" y="621.0" width="2.4" height="2.4"/><rect x="210.3" y="621.0" width="2.4" height="2.4"/>
<rect x="199.4" y="662.4" width="2.4" height="2.4"/><rect x="204.3" y="662.4" width="2.4" height="2.4"/><rect x="209.3" y="662.4" width="2.4" height="2.4"/>
<rect x="199.4" y="667.3" width="2.4" height="2.4"/><rect x="204.3" y="667.3" width="2.4" height="2.4"/><rect x="209.3" y="667.3" width="2.4" height="2.4"/>
<rect x="199.4" y="672.3" width="2.4" height="2.4"/><rect x="204.3" y="672.3" width="2.4" height="2.4"/><rect x="209.3" y="672.3" width="2.4" height="2.4"/>
</g>
<!-- icon 7 -->
<rect x="199.5" y="693.5" width="15" height="13" fill="#F6F6F6" stroke="#808080"/>
<path d="M208 697 V704 H212.5 V697" stroke="#0000F0" stroke-width="1.2" fill="none"/>
<path d="M200.5 700 H205 M203.5 697.5 L206.5 700 L203.5 702.5 Z" stroke="#000" stroke-width="1.8" fill="#000"/>
<g fill="#F0E000" stroke="#000" stroke-width="0.8"><rect x="206.8" y="695.8" width="2.4" height="2.4"/><rect x="211.3" y="695.8" width="2.4" height="2.4"/><rect x="206.8" y="702.8" width="2.4" height="2.4"/></g>
</svg>


<!-- status bar -->
<div class="a" style="left:3px;top:730px;width:948px;height:1px;background:#716F64"></div>
<div class="a" style="left:3px;top:745px;width:949px;height:1px;background:#FFFFFF"></div>
<div class="a" style="left:3px;top:730px;width:1px;height:15px;background:#716F64"></div>
</body></html>
